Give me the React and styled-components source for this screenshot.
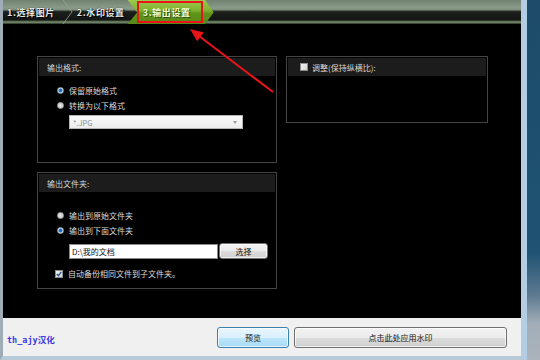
import React from "react";
import styled, { createGlobalStyle } from "styled-components";

const Global = createGlobalStyle`
  html, body { margin: 0; padding: 0; }
  body { width: 540px; height: 360px; overflow: hidden; font-family: "Noto Sans CJK SC", "Noto Sans", sans-serif; }
  #root { width: 540px; height: 360px; }
`;

const Screen = styled.div`
  position: relative;
  width: 540px;
  height: 360px;
  display: flex;
  background: linear-gradient(180deg, #1d4b69 0%, #1f5273 70%, #5d7a90 82%, #a3aeb8 90%, #aab3bb 100%);
`;

const Window = styled.div`
  width: 518px;
  height: 356px;
  display: flex;
  flex-direction: column;
  border-left: 3px solid #9eacb6;
  border-right: 6px solid #b3cde4;
  border-bottom: 4px solid #b8c9d8;
  box-shadow: inset -1px 0 0 #6d8aa3;
`;

const TabBar = styled.div`
  height: 24px;
  flex: none;
  display: flex;
  align-items: stretch;
  background: linear-gradient(180deg,
    #718270 0px, #8b9b89 8px, #7e8e7c 10px, #2d332c 11px,
    #1c1f1c 12px, #131513 20px, #46573f 21px, #7a8f74 22px, #5b6d55 23px, #1a1f19 24px);
`;

const TabLabel = styled.div`
  display: flex;
  align-items: center;
  padding: 1px 0 0 ${(p) => p.$pl || 0}px;
  font-size: 9px;
  font-weight: 700;
  letter-spacing: 0.6px;
  color: #e6e8e2;
  text-shadow: 0 0 1px #000, 1px 1px 0 #000;
  white-space: nowrap;
`;

const Chevron = styled.svg`
  width: 22px;
  height: 24px;
  flex: none;
`;

const ActiveWrap = styled.div`
  position: relative;
  width: 86px;
  margin-left: 3px;
  flex: none;
`;

const ActiveShape = styled.div`
  position: absolute;
  inset: 0 0 0 0;
  clip-path: polygon(0 0, 90% 0, 100% 52%, 90% 100%, 0 100%, 11% 52%);
  background: linear-gradient(180deg, #9ccb4c 0%, #7db031 45%, #5f941b 55%, #578a16 100%);
  display: flex;
  align-items: center;
  justify-content: center;
  padding: 1px 8px 0 0;
  box-sizing: border-box;
  font-size: 9px;
  font-weight: 700;
  letter-spacing: 0.6px;
  color: #f4fbd2;
  text-shadow: 1px 1px 0 #2f4d0c;
  white-space: nowrap;
`;

const Highlight = styled.div`
  position: absolute;
  left: 9px;
  top: 1px;
  width: 66px;
  height: 22px;
  box-sizing: border-box;
  border: 2px solid #e8141a;
`;

const Content = styled.div`
  flex: 1;
  background: #000;
  padding: 32px 0 0 34px;
  display: grid;
  grid-template-columns: 240px 202px;
  grid-template-rows: 107px 117px;
  column-gap: 9px;
  row-gap: 9px;
  align-items: start;
`;

const Panel = styled.div`
  box-sizing: border-box;
  height: ${(p) => p.$h}px;
  border: 1px solid #444;
  padding: 1px;
  display: flex;
  flex-direction: column;
`;

const PanelHeader = styled.div`
  height: 18px;
  flex: none;
  background: #1c1c1c;
  display: flex;
  align-items: center;
  gap: 4px;
  padding-left: ${(p) => p.$pl || 8}px;
  font-size: 8px;
  color: #d8d8d8;
`;

const PanelBody = styled.div`
  display: flex;
  flex-direction: column;
  padding: ${(p) => p.$pt}px 0 0 16px;
`;

const OptionRow = styled.div`
  height: 15px;
  display: flex;
  align-items: center;
  gap: 5px;
  font-size: 8px;
  color: #dcdcdc;
  white-space: nowrap;
`;

const Radio = styled.span`
  width: 7px;
  height: 7px;
  border-radius: 50%;
  flex: none;
  box-sizing: border-box;
  margin-left: 2px;
  background: ${(p) =>
    p.$on
      ? "radial-gradient(circle, #1f6fc4 0 1.6px, #7eb0e0 2px, #ffffff 2.4px)"
      : "radial-gradient(circle, #e6e6e6 0, #c4c4c4 100%)"};
  border: 1px solid ${(p) => (p.$on ? "#9aa4ad" : "#b0b0b0")};
`;

const Check = styled.span`
  width: 8px;
  height: 8px;
  flex: none;
  box-sizing: border-box;
  border: 1px solid #8e8f8f;
  background: linear-gradient(135deg, #f2f2f2, #d4d4d4);
  display: flex;
  align-items: center;
  justify-content: center;
`;

const Select = styled.div`
  margin: 2px 0 0 14px;
  width: 174px;
  height: 14px;
  box-sizing: border-box;
  border: 1px solid #b5b5b5;
  background: linear-gradient(180deg, #fafafa, #ececec);
  display: flex;
  align-items: center;
  justify-content: space-between;
  padding: 0 5px 0 3px;
  font-size: 7.5px;
  color: #8a8a8a;
`;

const DropArrow = styled.span`
  width: 0;
  height: 0;
  border-left: 2.5px solid transparent;
  border-right: 2.5px solid transparent;
  border-top: 3px solid #999;
`;

const PathRow = styled.div`
  margin: 5px 0 0 14px;
  display: flex;
  align-items: center;
  gap: 1px;
`;

const PathInput = styled.div`
  width: 149px;
  height: 15px;
  box-sizing: border-box;
  border: 1px solid #8a8a8a;
  background: #fff;
  display: flex;
  align-items: center;
  padding-left: 2px;
  font-size: 8px;
  color: #111;
`;

const WinButton = styled.button`
  box-sizing: border-box;
  width: ${(p) => p.$w}px;
  height: ${(p) => p.$h}px;
  padding: 0;
  border: 1px solid ${(p) => (p.$focus ? "#3c7fb1" : "#707070")};
  border-radius: 3px;
  background: ${(p) =>
    p.$focus
      ? "linear-gradient(180deg, #eaf6fd 0%, #d9f0fc 50%, #bee6fd 51%, #a7d9f5 100%)"
      : "linear-gradient(180deg, #f2f2f2 0%, #ebebeb 50%, #dddddd 51%, #cfcfcf 100%)"};
  box-shadow: inset 0 0 0 1px rgba(255, 255, 255, 0.7);
  font-family: "Noto Sans CJK SC", sans-serif;
  font-size: 8px;
  color: #111;
  display: flex;
  align-items: center;
  justify-content: center;
`;

const CheckRow = styled(OptionRow)`
  margin-top: 7px;
  gap: 5px;
`;

const Footer = styled.div`
  height: 38px;
  flex: none;
  background: #f0f0f0;
  display: flex;
  align-items: center;
  padding: 0 14px 0 4px;
  gap: 5px;
`;

const Credit = styled.div`
  flex: 1;
  font-family: "DejaVu Sans Mono", "Noto Sans CJK SC", monospace;
  font-weight: 700;
  font-size: 8.5px;
  color: #3a3ae6;
  padding-top: 4px;
`;

const ArrowOverlay = styled.svg`
  position: absolute;
  left: 0;
  top: 0;
  width: 540px;
  height: 360px;
  pointer-events: none;
`;

export default function App() {
  return (
    <>
      <Global />
      <Screen>
        <Window>
          <TabBar>
            <TabLabel $pl={4}>1.选择图片</TabLabel>
            <Chevron viewBox="0 0 22 24">
              <polyline points="8,0 17,12 8,24" fill="none" stroke="#9aa596" strokeWidth="0.8" />
            </Chevron>
            <TabLabel>2.水印设置</TabLabel>
            <ActiveWrap>
              <ActiveShape>3.输出设置</ActiveShape>
              <Highlight />
            </ActiveWrap>
          </TabBar>
          <Content>
            <Panel $h={107}>
              <PanelHeader>输出格式:</PanelHeader>
              <PanelBody $pt={7}>
                <OptionRow>
                  <Radio $on />
                  保留原始格式
                </OptionRow>
                <OptionRow>
                  <Radio />
                  转换为以下格式
                </OptionRow>
                <Select>
                  *.JPG
                  <DropArrow />
                </Select>
              </PanelBody>
            </Panel>
            <Panel $h={67}>
              <PanelHeader $pl={12}>
                <Check />
                调整(保持纵横比):
              </PanelHeader>
            </Panel>
            <Panel $h={117}>
              <PanelHeader>输出文件夹:</PanelHeader>
              <PanelBody $pt={16}>
                <OptionRow>
                  <Radio />
                  输出到原始文件夹
                </OptionRow>
                <OptionRow>
                  <Radio $on />
                  输出到下面文件夹
                </OptionRow>
                <PathRow>
                  <PathInput>D:\我的文档</PathInput>
                  <WinButton $w={49} $h={16}>选择</WinButton>
                </PathRow>
                <CheckRow>
                  <Check>
                    <svg width="6" height="6" viewBox="0 0 6 6">
                      <polyline points="0.8,3 2.4,4.8 5.3,0.8" fill="none" stroke="#1f4f9c" strokeWidth="1.3" />
                    </svg>
                  </Check>
                  自动备份相同文件到子文件夹。
                </CheckRow>
              </PanelBody>
            </Panel>
          </Content>
          <Footer>
            <Credit>th_ajy汉化</Credit>
            <WinButton $w={72} $h={21} $focus>预览</WinButton>
            <WinButton $w={213} $h={21}>点击此处应用水印</WinButton>
          </Footer>
        </Window>
        <ArrowOverlay viewBox="0 0 540 360">
          <line x1="273" y1="92" x2="199" y2="36" stroke="#e8141a" strokeWidth="2" />
          <polygon points="190,29 203.8,32.5 197.2,41.2" fill="#e8141a" />
        </ArrowOverlay>
      </Screen>
    </>
  );
}
